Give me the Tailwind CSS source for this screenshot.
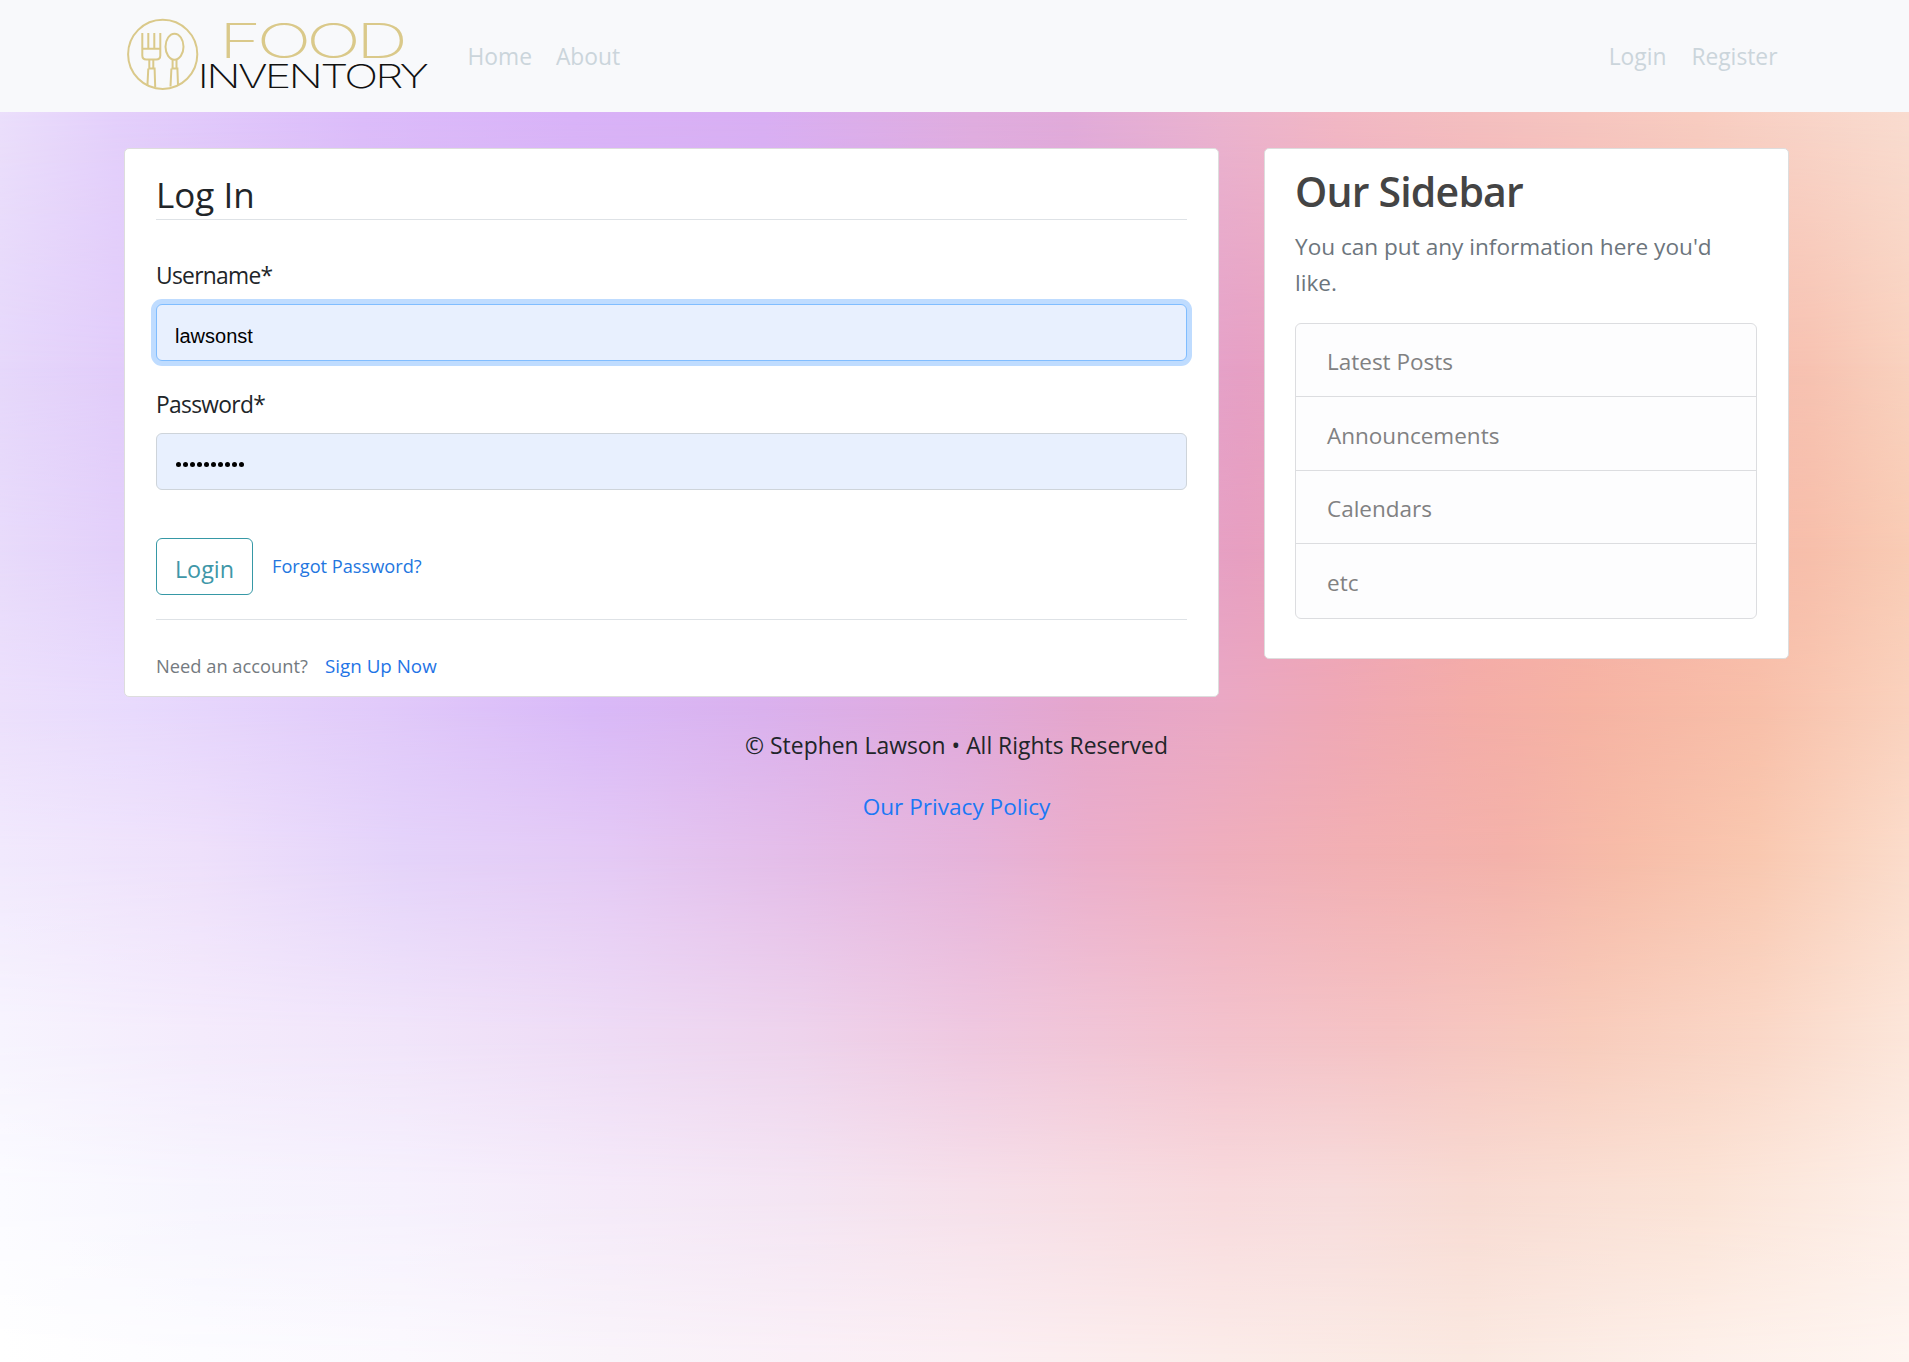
<!DOCTYPE html>
<html lang="en">
<head>
<meta charset="utf-8">
<title>Food Inventory</title>
<script src="https://cdn.jsdelivr.net/npm/@tailwindcss/browser@4"></script>
</head>
<body class="relative min-h-screen overflow-hidden bg-white font-['Open_Sans',sans-serif] text-[22.6px] leading-9 text-[#212529]">
<div id="backdrop" class="absolute inset-0 -z-10 h-[1362px]"></div>

<header class="h-28 bg-[#f8f9fb]">
  <div class="mx-auto flex h-full w-[1664px] items-center text-[22.800px] text-[#cbd5db]">
    <svg class="ml-[3px] h-28 w-[306px] shrink-0" viewBox="126 0 306 112" fill="none" stroke="#dac98a" stroke-width="2">
      <circle cx="162.7" cy="54.3" r="34.6"/>
      <path d="M142.3 33v22.500q0 4 4 4h10q4 0 4-4V33M148.300 33v15M154.300 33v15M142.300 48.700h18M149.300 59.500v9M153.300 59.500v9M148.300 68.500h6.300l.6 18.500M148.300 68.500l-.9 17.500"/>
      <ellipse cx="174.500" cy="46.700" rx="9" ry="13"/>
      <path d="M172.600 60v8.500M176.500 60v8.500M171.400 68.500h6l.6 16.500M171.400 68.500l-.9 18"/>
      <text transform="translate(219 58) scale(1.51 1)" font-family="Inter, sans-serif" font-size="48" font-weight="200" letter-spacing="-3.2" fill="#dac98a" stroke="none">FOOD</text>
      <text transform="translate(197.500 87.500) scale(1.385 1)" font-family="Inter, sans-serif" font-size="32.500" font-weight="200" letter-spacing="-2" fill="#111" stroke="none">INVENTORY</text>
    </svg>
    <nav class="ml-9 flex gap-6 pt-0.5"><a>Home</a><a>About</a></nav>
    <nav class="mr-[9px] ml-auto flex gap-[25px] pt-0.5"><a>Login</a><a>Register</a></nav>
  </div>
</header>

<main class="mx-auto mt-9 flex w-[1665px] items-start gap-[45px] pl-[2px]">
  <section class="h-[549px] w-[1095px] shrink-0 rounded-[5px] border border-[#ddd] bg-white pt-6 pr-[31px] pl-[31px]">
    <h1 class="border-b border-[#dee2e6] pb-[3px] text-[35px] leading-[43px]">Log In</h1>
    <label class="mt-[38px] block text-[22.800px] tracking-[-0.7px]">Username*</label>
    <div class="mt-2.5 flex h-[57px] items-center rounded-md border border-[#80bdff] bg-[#e8f0fe] px-[18px] pt-1.5 font-['Liberation_Sans',sans-serif] text-[20px] font-normal text-black ring-5 ring-[#bfdcff]">lawsonst</div>
    <label class="mt-[26px] block text-[22.800px] tracking-[-0.7px]">Password*</label>
    <div class="mt-2.5 flex h-[57px] items-center gap-[2px] rounded-md border border-[#ced4da] bg-[#e8f0fe] px-[19px] pt-1.5">
      <i class="size-[5px] rounded-full bg-black"></i><i class="size-[5px] rounded-full bg-black"></i><i class="size-[5px] rounded-full bg-black"></i><i class="size-[5px] rounded-full bg-black"></i><i class="size-[5px] rounded-full bg-black"></i><i class="size-[5px] rounded-full bg-black"></i><i class="size-[5px] rounded-full bg-black"></i><i class="size-[5px] rounded-full bg-black"></i><i class="size-[5px] rounded-full bg-black"></i><i class="size-[5px] rounded-full bg-black"></i>
    </div>
    <div class="mt-12 flex items-center">
      <button class="h-[57px] w-[97px] rounded-md border border-[#3698a6] pt-[5px] text-[23.400px] text-[#3f97a8]">Login</button>
      <a class="ml-[19px] -mt-0.5 text-[18.200px] text-[#2376df]">Forgot Password?</a>
    </div>
    <div class="mt-6 flex border-t border-[#dee2e6] pt-7 text-[18.300px]">
      <span class="w-[169px] text-[#747a80]">Need an account?</span><a class="text-[18.800px] text-[#1f74e6]">Sign Up Now</a>
    </div>
  </section>

  <aside class="h-[511px] w-[525px] shrink-0 rounded-[5px] border border-[#ddd] bg-white px-[30px] pt-[17px] text-[#6c757d]">
    <h2 class="text-[41px] leading-[50px] font-semibold tracking-[-0.8px] text-[#444]">Our Sidebar</h2>
    <p class="mt-[13px]">You can put any information here you'd like.</p>
    <ul class="mt-[22px] h-[296px] w-[462px] divide-y divide-[#dcdde0] rounded-md border border-[#dcdde0] bg-[#fdfdfe] text-[22.500px] text-[#818182]">
      <li class="flex h-[73px] items-center px-[31px] pt-1">Latest Posts</li>
      <li class="flex h-[74px] items-center px-[31px] pt-1">Announcements</li>
      <li class="flex h-[73px] items-center px-[31px] pt-1">Calendars</li>
      <li class="flex h-[74px] items-center px-[31px] pt-1">etc</li>
    </ul>
  </aside>
</main>

<footer class="mt-[31px] pl-1 text-center">
  <p class="text-[22.900px]">© Stephen Lawson • All Rights Reserved</p>
  <p class="mt-[25px] text-[#1b78f5]"><a>Our Privacy Policy</a></p>
</footer>

<script>
// Mesh gradient: each row is a horizontal gradient that fades in over the row above it.
const rows = [
  [112, '#ebdffb 0,#e4d0fb 6%,#dcbcfa 19%,#d9b3f8 30%,#d9aff3 40%,#e0addf 51%,#e1abda 56%,#ebb4cf 64%,#f2b8c5 70%,#f4bfc0 77%,#f6c6c0 83%,#f8cdc1 89%,#f9dcd0 100%'],
  [365, '#e6d8fb 0,#e2cdfa 6%,#dcbff8 22%,#dab2f6 42%,#e0aadd 55%,#e6a0c5 65%,#f3aaad 78%,#f7c3b2 95%,#f9d2bf 100%'],
  [548, '#e8dbfb 0,#e3d0fa 6%,#dcbff8 24%,#dab2f0 40%,#e0aadd 52%,#e79fc1 65%,#f3aaa9 78%,#f7bfab 95%,#f9ccb5 100%'],
  [706, '#ece0fc 0,#e8dafd 7%,#e1cafa 20%,#d9b9f8 31%,#dab1ee 40%,#e0aadd 50%,#e5a6cc 57%,#eaa8c4 64%,#efa8b6 70%,#f4ada8 77%,#f6b3a3 83%,#f8bfa9 92%,#fad2be 100%'],
  [852, '#f1e9fd 0,#eee0fb 10.5%,#e4d3fa 21%,#e4c9f5 32%,#e4bce8 42%,#e6b3da 51%,#ebaecb 57%,#efaebd 64%,#f2b0b3 71%,#f4b2aa 79%,#f7bca8 85%,#f9c8b0 92%,#fbdccb 100%'],
  [1035, '#f7f4fe 0,#f4ebfc 10.5%,#f1e5fa 21%,#eedbf5 32%,#eed3ec 42%,#efc8e0 51%,#f3c2cd 64%,#f5c3c3 73%,#f8ccbc 83%,#fad7c7 92%,#fce6da 100%'],
  [1193, '#fbfbff 0,#f7f5fe 10.5%,#f6f1fd 21%,#f5eaf9 32%,#f4e5f3 42%,#f6e0ea 51%,#f8dadd 64%,#f7dcdc 70%,#f8dbd3 77%,#fbe3d6 89%,#fdefe8 100%'],
  [1362, '#fff 0,#fcfcff 10.5%,#fbf9fe 21%,#f9f4fa 32%,#faf0f7 42%,#fbeff3 51%,#fbece9 64%,#fae9e1 77%,#fdf0ea 89%,#fef5f1 100%'],
];
const backdrop = document.getElementById('backdrop');
rows.forEach(([y, stops], i) => {
  const layer = document.createElement('div');
  layer.className = 'absolute inset-0';
  layer.style.background = `linear-gradient(90deg,${stops})`;
  if (i) layer.style.maskImage = `linear-gradient(transparent ${rows[i - 1][0]}px,#000 ${y}px)`;
  backdrop.append(layer);
});
</script>
</body>
</html>
